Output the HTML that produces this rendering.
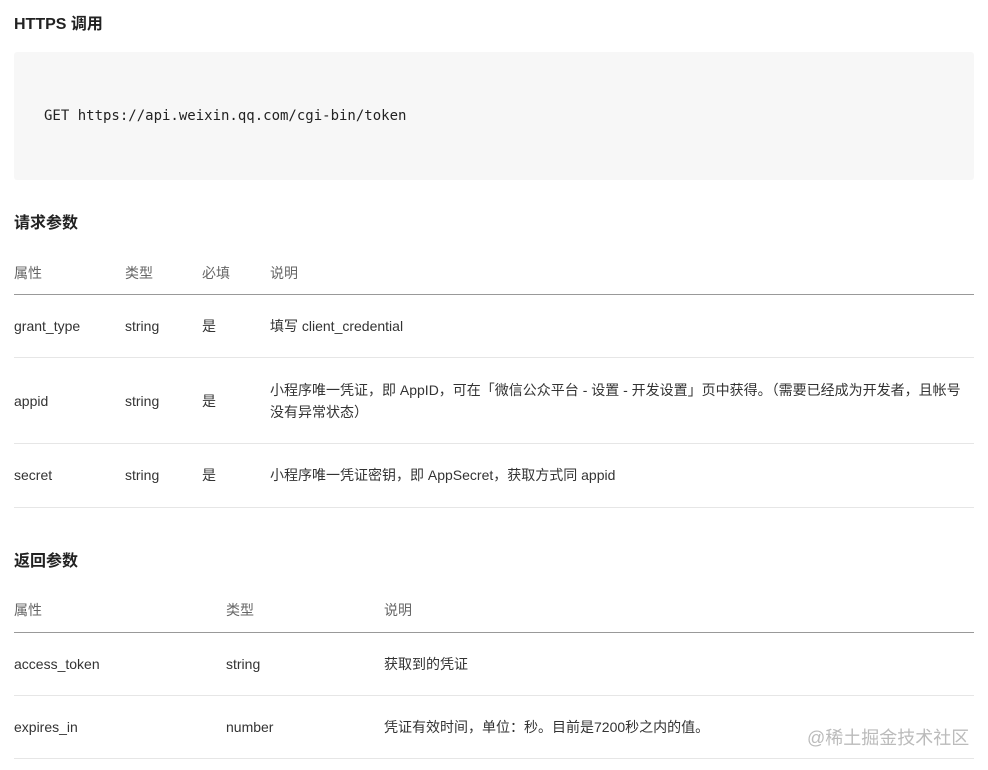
<!DOCTYPE html>
<html><head><meta charset="utf-8"><style>
body{margin:0;width:988px;height:770px;background:#fff;position:relative;overflow:hidden;font-family:"Liberation Sans","Noto Sans CJK SC",sans-serif;color:#333;font-size:14px}
.a{position:absolute;white-space:nowrap;line-height:18px}
h{position:absolute;font-weight:bold;font-size:16px;color:#222;line-height:20px}
.th{color:#666}
.ln{position:absolute;left:14px;width:960px;height:1px;background:#e6e6e6}
.hl{background:#999}
</style></head><body>
<h style="left:14px;top:15px">HTTPS 调用</h>
<div style="position:absolute;left:14px;top:52px;width:960px;height:128px;background:#f7f7f7;border-radius:3px"></div>
<div class="a" style="left:44px;top:107px;font-family:'DejaVu Sans Mono','Liberation Mono',monospace;font-size:14px;color:#222">GET https://api.weixin.qq.com/cgi-bin/token</div>
<h style="left:14px;top:214px">请求参数</h>
<div class="a th" style="left:14px;top:264px">属性</div>
<div class="a th" style="left:125px;top:264px">类型</div>
<div class="a th" style="left:202px;top:264px">必填</div>
<div class="a th" style="left:270px;top:264px">说明</div>
<div class="ln hl" style="top:294px"></div>
<div class="a" style="left:14px;top:317px">grant_type</div><div class="a" style="left:125px;top:317px">string</div><div class="a" style="left:202px;top:317px">是</div><div class="a" style="left:270px;top:317px">填写 client_credential</div>
<div class="ln" style="top:357px"></div>
<div class="a" style="left:14px;top:392px">appid</div><div class="a" style="left:125px;top:392px">string</div><div class="a" style="left:202px;top:392px">是</div>
<div class="a" style="left:270px;top:379px;line-height:22px">小程序唯一凭证，即 AppID，可在「微信公众平台 - 设置 - 开发设置」页中获得。（需要已经成为开发者，且帐号<br>没有异常状态）</div>
<div class="ln" style="top:443px"></div>
<div class="a" style="left:14px;top:466px">secret</div><div class="a" style="left:125px;top:466px">string</div><div class="a" style="left:202px;top:466px">是</div><div class="a" style="left:270px;top:466px">小程序唯一凭证密钥，即 AppSecret，获取方式同 appid</div>
<div class="ln" style="top:507px"></div>
<h style="left:14px;top:552px">返回参数</h>
<div class="a th" style="left:14px;top:601px">属性</div>
<div class="a th" style="left:226px;top:601px">类型</div>
<div class="a th" style="left:384px;top:601px">说明</div>
<div class="ln hl" style="top:632px"></div>
<div class="a" style="left:14px;top:655px">access_token</div><div class="a" style="left:226px;top:655px">string</div><div class="a" style="left:384px;top:655px">获取到的凭证</div>
<div class="ln" style="top:695px"></div>
<div class="a" style="left:14px;top:718px">expires_in</div><div class="a" style="left:226px;top:718px">number</div><div class="a" style="left:384px;top:718px">凭证有效时间，单位：秒。目前是7200秒之内的值。</div>
<div class="ln" style="top:758px"></div>
<div class="a" style="left:807px;top:727px;font-size:18px;line-height:22px;color:#bbb">@稀土掘金技术社区</div>
</body></html>
